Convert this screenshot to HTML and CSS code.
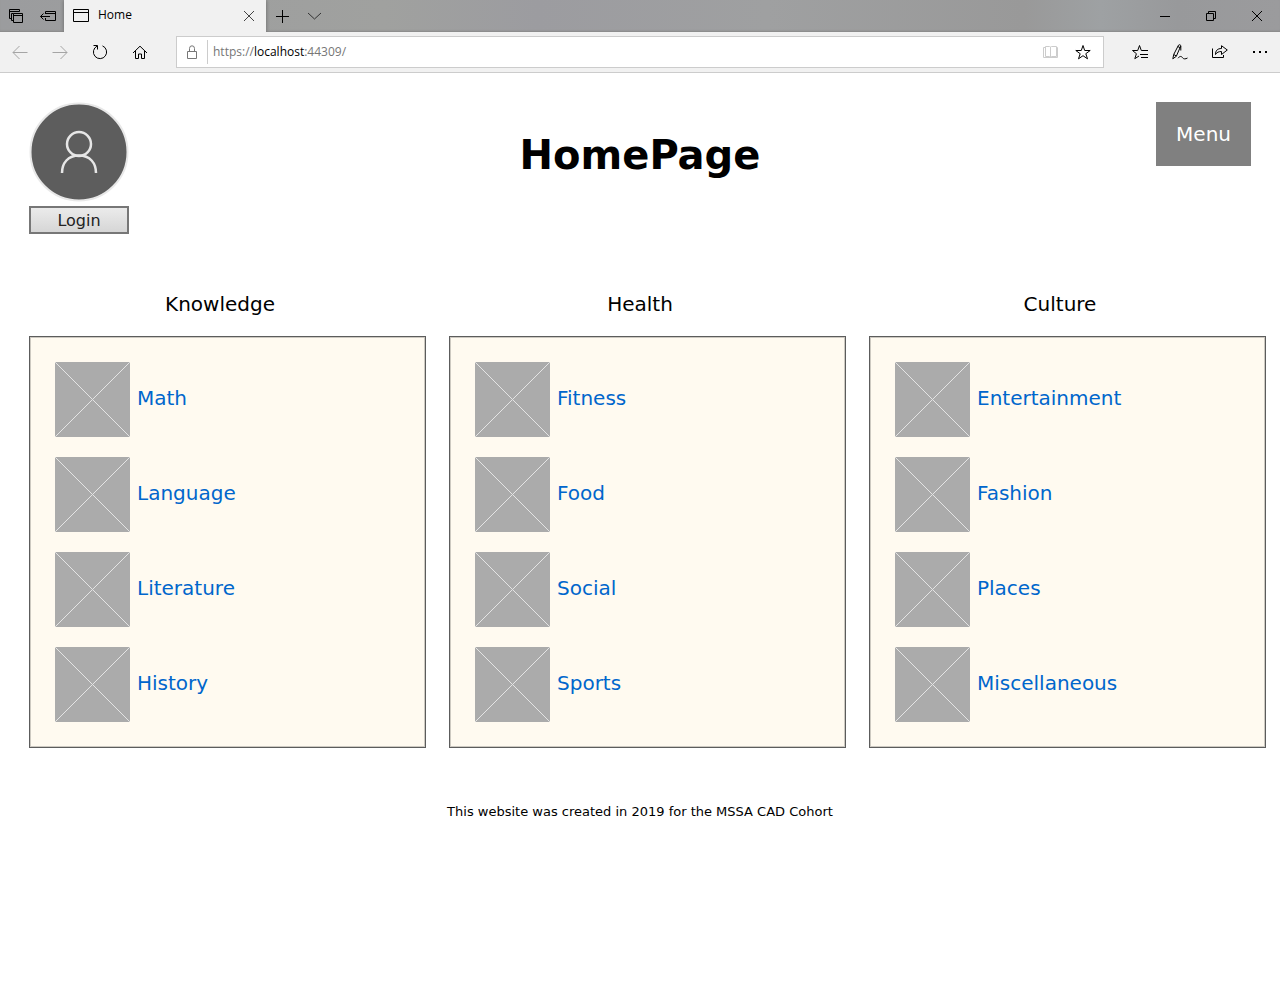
FILE: index.html
```html
<!DOCTYPE html>
<html lang="en">
<head>
<meta charset="utf-8">
<title>Home</title>
<link rel="stylesheet" href="styles.css">
</head>
<body>
<div class="browser">
  <div class="tabbar">
    <button class="tab-btn" aria-label="Tabs set aside"><svg class="icon" viewBox="0 0 16 16"><path d="M3.500 10.500h-2v-9h10v2M1.500 3.500h10M5.500 12.500h-2v-7M5.500 5.500h9v9h-9zM5.500 7.500h9M3.500 5.500h2"/></svg></button>
    <button class="tab-btn" aria-label="Set these tabs aside"><svg class="icon" viewBox="0 0 16 16"><path d="M5.500 6v-2.500h10v9h-10V10M5.500 5.500h10M10 8.500H0.500M3.500 5.500l-3 3 3 3"/></svg></button>
    <div class="tab">
      <svg class="icon" viewBox="0 0 16 16"><path d="M.5 1.500h15v12H.5zM.5 4.500h15"/></svg>
      <span class="tab-title">Home</span>
      <button class="tab-close" aria-label="Close tab"><svg class="icon" viewBox="0 0 16 16"><path d="M3 3l10 10M13 3L3 13"/></svg></button>
    </div>
    <button class="tab-btn" aria-label="New tab"><svg class="icon" viewBox="0 0 16 16"><path d="M8.500 2v13M2 8.500h13"/></svg></button>
    <button class="tab-btn" aria-label="Show tab previews"><svg class="icon faint" viewBox="0 0 16 16"><path d="M2 5l6.500 6L15 5"/></svg></button>
    <div class="window-controls">
      <button class="win-btn" aria-label="Minimize"><svg class="icon" viewBox="0 0 16 16"><path d="M3 8.500h10"/></svg></button>
      <button class="win-btn" aria-label="Restore"><svg class="icon" viewBox="0 0 16 16"><path d="M3.500 5.500h7v7h-7zM5.500 5.500v-2h7v7h-2"/></svg></button>
      <button class="win-btn" aria-label="Close"><svg class="icon" viewBox="0 0 16 16"><path d="M3 3l10 10M13 3L3 13"/></svg></button>
    </div>
  </div>
  <div class="toolbar">
    <button class="tool-btn" aria-label="Back" disabled><svg class="icon" viewBox="0 0 16 16"><path d="M15.500 8.500H1M7.500 2L1 8.500 7.500 15"/></svg></button>
    <button class="tool-btn" aria-label="Forward" disabled><svg class="icon" viewBox="0 0 16 16"><path d="M.5 8.500H15M8.500 2L15 8.500 8.500 15"/></svg></button>
    <button class="tool-btn" aria-label="Refresh"><svg class="icon" viewBox="0 0 16 16"><path d="M10.500 1.900a6.600 6.600 0 1 1-5.400.2M1.500 1.500h4v4"/></svg></button>
    <button class="tool-btn" aria-label="Home"><svg class="icon" viewBox="0 0 16 16"><path d="M1 9l7-6.800L15 9M3.500 7v7.500h3V10h3v4.500h3V7"/></svg></button>
    <div class="address">
      <svg class="icon lock" viewBox="0 0 16 16"><path d="M3.500 7.500h9v7h-9zM5.500 7.500V4.500a2.500 2.700 0 0 1 5 0v3"/></svg>
      <a class="url" href="https://localhost:44309/">https://<span class="url-host">localhost</span>:44309/</a>
      <button class="address-btn reading" aria-label="Reading view" disabled><svg class="icon" viewBox="0 0 16 16"><path d="M2.500 2.500h4L7.500 3l1-.5h5v10h-5l-1 1-1-1h-4zM7.500 3v11M2 3.500H.5v10h14v-10H14"/></svg></button>
      <button class="address-btn" aria-label="Add to favorites"><svg class="icon" viewBox="0 0 16 16"><path d="M8 1.500l1.700 5h5.500l-4.400 3.200 1.700 5.100L8 11.700l-4.500 3.100 1.700-5.100L.8 6.500h5.500z"/></svg></button>
    </div>
    <button class="tool-btn" aria-label="Favorites"><svg class="icon" viewBox="0 0 16 16"><path d="M7 12l-4.200 2.700 1.600-5L.5 6.500h5.200L7.500 1.500l1.800 5H16M8 10.500h8M9 13.500h7"/></svg></button>
    <button class="tool-btn" aria-label="Add notes"><svg class="icon" viewBox="0 0 16 16"><path d="M.8 14.800l1-4.500L6.500 1.200c.8-1 2.700-.3 2.200 1L4.300 12.300.8 14.800M1.800 10.500l2.500 1.500M5.800 2.500l2.400 1.200M8.800 2v4.500M6 14.200c2-2.500 3.500-2 4.500-.5s3 1.500 5 .3"/></svg></button>
    <button class="tool-btn" aria-label="Share"><svg class="icon" viewBox="0 0 16 16"><path d="M.5 4.500v9h11V11M3.500 10.500c0-4 2-6 6-6V1.700L15.300 6 9.500 10.500V7.500c-3 0-4.500.8-6 3z"/></svg></button>
    <button class="tool-btn" aria-label="Settings and more"><svg class="icon dots" viewBox="0 0 16 16"><path d="M1 7h2v2H1zM7 7h2v2H7zM13 7h2v2h-2z"/></svg></button>
  </div>
</div>

<header class="header">
  <div class="account">
    <svg class="avatar" viewBox="0 0 100 100" role="img" aria-label="User"><circle class="avatar-disc" cx="50" cy="50" r="48.500"/><circle class="avatar-line" cx="50" cy="42" r="12"/><path class="avatar-line" d="M33 71c0-10 6-17.500 17-17.500S67 61 67 71"/></svg>
    <button class="login">Login</button>
  </div>
  <h1 class="title">HomePage</h1>
  <button class="menu">Menu</button>
</header>

<main class="topics">
  <section class="topic">
    <h2 class="topic-title">Knowledge</h2>
    <ul class="panel">
      <li><a class="entry" href="#math"><svg class="thumb" viewBox="0 0 75 75"><path d="M0 0l75 75M75 0L0 75"/></svg><span class="entry-name">Math</span></a></li>
      <li><a class="entry" href="#language"><svg class="thumb" viewBox="0 0 75 75"><path d="M0 0l75 75M75 0L0 75"/></svg><span class="entry-name">Language</span></a></li>
      <li><a class="entry" href="#literature"><svg class="thumb" viewBox="0 0 75 75"><path d="M0 0l75 75M75 0L0 75"/></svg><span class="entry-name">Literature</span></a></li>
      <li><a class="entry" href="#history"><svg class="thumb" viewBox="0 0 75 75"><path d="M0 0l75 75M75 0L0 75"/></svg><span class="entry-name">History</span></a></li>
    </ul>
  </section>
  <section class="topic">
    <h2 class="topic-title">Health</h2>
    <ul class="panel">
      <li><a class="entry" href="#fitness"><svg class="thumb" viewBox="0 0 75 75"><path d="M0 0l75 75M75 0L0 75"/></svg><span class="entry-name">Fitness</span></a></li>
      <li><a class="entry" href="#food"><svg class="thumb" viewBox="0 0 75 75"><path d="M0 0l75 75M75 0L0 75"/></svg><span class="entry-name">Food</span></a></li>
      <li><a class="entry" href="#social"><svg class="thumb" viewBox="0 0 75 75"><path d="M0 0l75 75M75 0L0 75"/></svg><span class="entry-name">Social</span></a></li>
      <li><a class="entry" href="#sports"><svg class="thumb" viewBox="0 0 75 75"><path d="M0 0l75 75M75 0L0 75"/></svg><span class="entry-name">Sports</span></a></li>
    </ul>
  </section>
  <section class="topic">
    <h2 class="topic-title">Culture</h2>
    <ul class="panel">
      <li><a class="entry" href="#entertainment"><svg class="thumb" viewBox="0 0 75 75"><path d="M0 0l75 75M75 0L0 75"/></svg><span class="entry-name">Entertainment</span></a></li>
      <li><a class="entry" href="#fashion"><svg class="thumb" viewBox="0 0 75 75"><path d="M0 0l75 75M75 0L0 75"/></svg><span class="entry-name">Fashion</span></a></li>
      <li><a class="entry" href="#places"><svg class="thumb" viewBox="0 0 75 75"><path d="M0 0l75 75M75 0L0 75"/></svg><span class="entry-name">Places</span></a></li>
      <li><a class="entry" href="#miscellaneous"><svg class="thumb" viewBox="0 0 75 75"><path d="M0 0l75 75M75 0L0 75"/></svg><span class="entry-name">Miscellaneous</span></a></li>
    </ul>
  </section>
</main>

<footer class="footer">This website was created in 2019 for the MSSA CAD Cohort</footer>
</body>
</html>
```
FILE: styles.css
```css
* { box-sizing: border-box; }

body {
  margin: 0;
  background: #fff;
  color: #000;
  font-family: Verdana, "DejaVu Sans", sans-serif;
}

button {
  margin: 0;
  padding: 0;
  border: 0;
  background: none;
  color: inherit;
  font: inherit;
}

/* Browser chrome */
.browser { font-family: "Segoe UI", "Open Sans", sans-serif; font-size: 12px; }

.icon {
  display: block;
  flex: none;
  width: 16px;
  height: 16px;
  fill: none;
  stroke: currentColor;
}

.faint { color: #333; }

.tabbar {
  display: flex;
  height: 32px;
  background: linear-gradient(90deg, #9b9c9e 0%, #a0a19f 30%, #9c9ca0 42%, #9fa0a1 60%, #999 80%, #9ea1a3 86%, #98999b 92%, #9b9b9d 100%);
  box-shadow: inset 0 -2px 2px -1px #888;
}

.tab-btn, .win-btn, .tool-btn, .address-btn {
  display: flex;
  align-items: center;
  justify-content: center;
}

.tab-btn { width: 32px; }

.tab {
  display: flex;
  align-items: center;
  gap: 9px;
  width: 202px;
  padding: 0 9px;
  background: #f1f1f1;
  box-shadow: 0 0 4px #666;
  clip-path: inset(0 -4px);
}

.tab-title { flex: 1; line-height: 16px; padding-bottom: 2px; }
.tab-close { color: #444; }
.window-controls { display: flex; margin-left: auto; }
.win-btn { width: 46px; }

.toolbar {
  display: flex;
  align-items: center;
  height: 41px;
  background: #f1f1f1;
  border-bottom: 1px solid #ccc;
}

.tool-btn { width: 40px; height: 32px; }
.tool-btn:disabled { color: #a5a5a5; }
.dots { fill: currentColor; stroke: none; }

.address {
  display: flex;
  flex: 1;
  align-items: center;
  height: 32px;
  margin: 0 16px;
  padding: 0 4px 0 7px;
  border: 1px solid #ccc;
  background: #fff;
}

.lock { color: #777; }

.url {
  flex: 1;
  margin-left: 7px;
  padding-left: 5px;
  border-left: 1px solid #ccc;
  color: #767676;
  line-height: 24px;
  text-decoration: none;
}

.url-host { color: #000; }
.address-btn { width: 32px; height: 30px; }
.reading { color: #ccc; }

/* Page header */
.header {
  display: grid;
  grid-template-columns: 1fr auto 1fr;
  align-items: start;
  padding: 29px 29px 0;
}

.account { display: grid; gap: 4px; width: 100px; }
.avatar { display: block; width: 100px; height: 100px; }
.avatar-disc { fill: #5d5d5d; stroke: #e8e8e8; stroke-width: 2; }
.avatar-line { fill: none; stroke: #e6e6e6; stroke-width: 2.500; }

.login {
  height: 28px;
  border: 2px solid #777;
  background: linear-gradient(#ebebeb, #d6d6d6);
  color: #222;
  font-size: 16px;
}

.title { margin: 29px 0 0; font-size: 40px; line-height: 48px; }

.menu {
  justify-self: end;
  padding: 20px;
  background: #808080;
  color: #fff;
  font-size: 20px;
  line-height: 24px;
}

/* Topic columns */
.topics {
  display: grid;
  grid-template-columns: repeat(3, 1fr);
  gap: 23px;
  padding: 58px 14px 0 29px;
}

.topic-title {
  margin: 0 0 20px;
  padding-right: 15px;
  font-size: 20px;
  font-weight: 400;
  line-height: 24px;
  text-align: center;
}

.panel {
  display: grid;
  gap: 20px;
  margin: 0;
  padding: 25px;
  border: 1px solid #5c5c5c;
  background: #fffaf0;
  box-shadow: inset 0 0 0 1px #cdc9c1;
  list-style: none;
}

.entry {
  display: flex;
  align-items: center;
  gap: 7px;
  color: #06c;
  font-size: 20px;
  line-height: 24px;
  text-decoration: none;
}

.entry-name { padding-bottom: 4px; }

.thumb {
  flex: none;
  width: 75px;
  height: 75px;
  border-radius: 1px;
  background: #ababab;
  fill: none;
  stroke: #e4e4e4;
}

.footer { padding: 54px 0 20px; font-size: 13px; line-height: 20px; text-align: center; }
```
